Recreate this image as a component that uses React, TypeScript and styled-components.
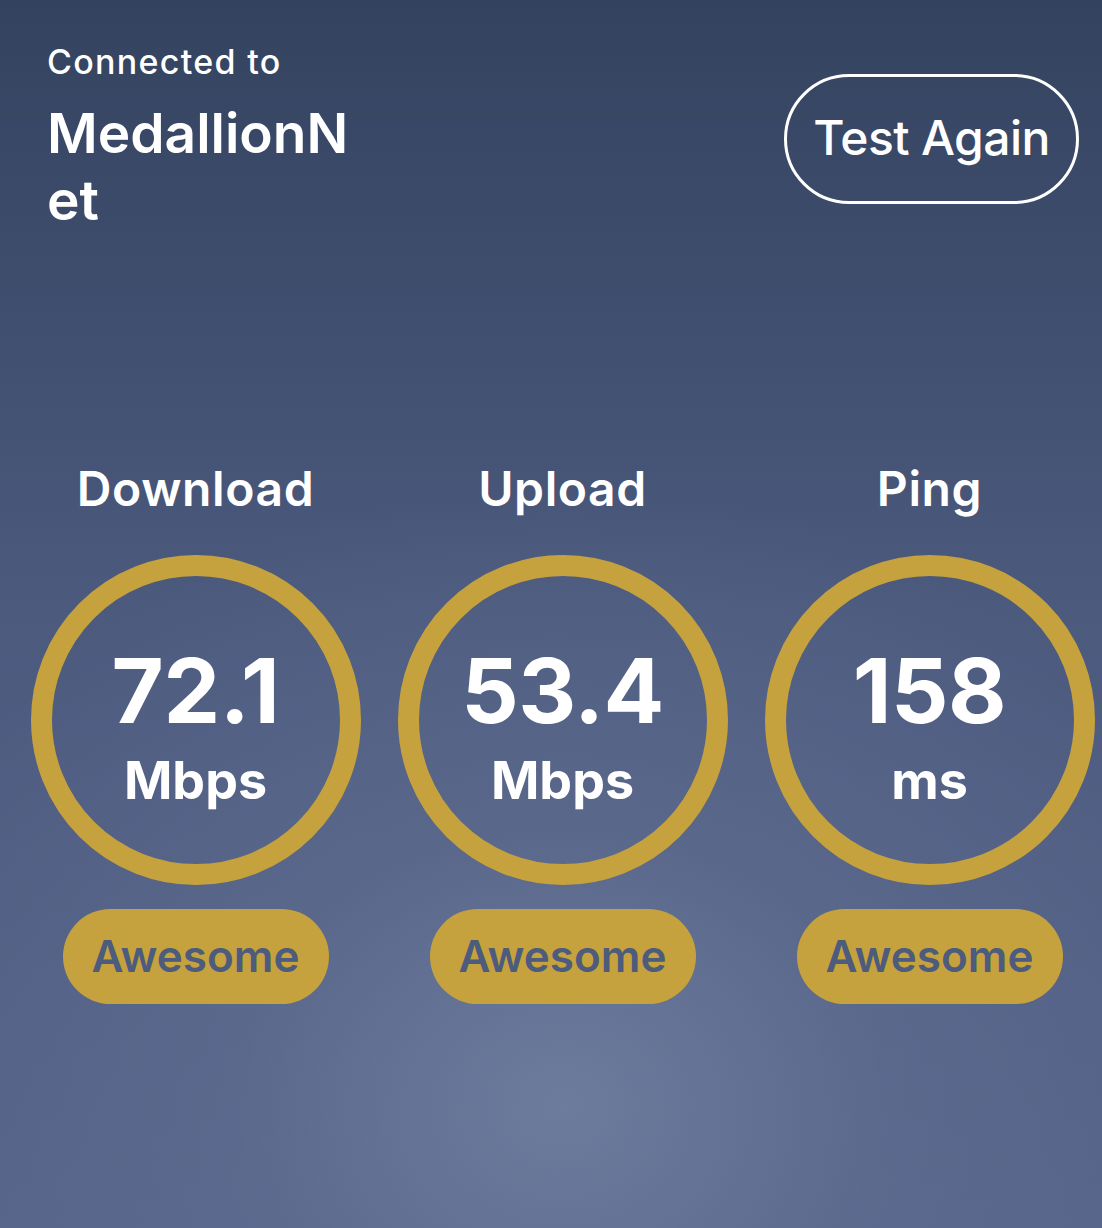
import { FC } from 'react';
import styled, { createGlobalStyle } from 'styled-components';

const GlobalStyle = createGlobalStyle`
  html, body {
    margin: 0;
    padding: 0;
  }
  body {
    font-family: Inter, "Noto Sans", "Liberation Sans", sans-serif;
    color: #ffffff;
    background: #4b5a7c;
  }
`;

const GOLD = '#c5a23d';
const INK = '#4d5b7c';

type Stat = {
  label: string;
  value: string;
  unit: string;
  rating: string;
};

const stats: Stat[] = [
  { label: 'Download', value: '72.1', unit: 'Mbps', rating: 'Awesome' },
  { label: 'Upload', value: '53.4', unit: 'Mbps', rating: 'Awesome' },
  { label: 'Ping', value: '158', unit: 'ms', rating: 'Awesome' }
];

const StatColumn: FC<{ stat: Stat }> = props => {
  const { stat } = props;
  return (
    <StyledStat>
      <div className="label">{stat.label}</div>
      <Ring>
        <div className="value">{stat.value}</div>
        <div className="unit">{stat.unit}</div>
      </Ring>
      <Badge>{stat.rating}</Badge>
    </StyledStat>
  );
};

const StyledStat = styled.li`
  display: flex;
  flex-direction: column;
  align-items: center;
  > .label {
    font-size: 48px;
    font-weight: 600;
    line-height: 56px;
    letter-spacing: 0.6px;
    margin-bottom: 38px;
  }
`;

const Ring = styled.div`
  box-sizing: border-box;
  width: 330px;
  height: 330px;
  border-radius: 50%;
  border: 21px solid ${GOLD};
  display: flex;
  flex-direction: column;
  align-items: center;
  justify-content: center;
  padding-top: 13px;
  > .value {
    font-size: 90px;
    font-weight: 700;
    line-height: 90px;
    letter-spacing: -0.5px;
  }
  > .unit {
    font-size: 52px;
    font-weight: 700;
    line-height: 52px;
    margin-top: 19px;
  }
`;

const Badge = styled.div`
  margin-top: 24px;
  width: 266px;
  height: 95px;
  border-radius: 48px;
  background: ${GOLD};
  color: ${INK};
  display: flex;
  align-items: center;
  justify-content: center;
  font-size: 44px;
  font-weight: 600;
  padding-bottom: 2px;
  box-sizing: border-box;
`;

const App: FC = () => {
  return (
    <>
      <GlobalStyle />
      <Page>
        <Header>
          <Network>
            <div className="caption">Connected to</div>
            <div className="name">MedallionNet</div>
          </Network>
          <TestButton type="button">Test Again</TestButton>
        </Header>
        <Stats>
          {stats.map(stat => (
            <StatColumn key={stat.label} stat={stat} />
          ))}
        </Stats>
      </Page>
    </>
  );
};

const Page = styled.div`
  min-height: 1228px;
  box-sizing: border-box;
  overflow: hidden;
  padding: 41px 23px 0 47px;
  background:
    radial-gradient(ellipse 720px 620px at 51% 90%, rgba(110, 125, 158, 0.95) 0%, rgba(96, 110, 145, 0.6) 45%, rgba(86, 99, 138, 0) 100%),
    linear-gradient(to bottom, #33435f 0%, #3f4e6e 25%, #4c5a7e 50%, #56638a 100%);
`;

const Header = styled.header`
  display: flex;
  justify-content: space-between;
  align-items: flex-start;
`;

const Network = styled.div`
  > .caption {
    font-size: 34px;
    font-weight: 500;
    line-height: 41px;
    letter-spacing: 1.3px;
    margin-bottom: 18px;
  }
  > .name {
    width: 320px;
    font-size: 55px;
    font-weight: 600;
    line-height: 67px;
    word-break: break-all;
  }
`;

const TestButton = styled.button`
  margin-top: 33px;
  width: 295px;
  height: 130px;
  box-sizing: border-box;
  border: 3px solid #ffffff;
  border-radius: 65px;
  background: transparent;
  color: #ffffff;
  font-family: inherit;
  font-size: 48px;
  font-weight: 500;
  letter-spacing: -0.6px;
  padding: 0 0 4px;
`;

const Stats = styled.ul`
  list-style: none;
  margin: 227px 0 0 -35px;
  padding: 0;
  display: grid;
  grid-template-columns: repeat(3, 367px);
`;

export default App;
